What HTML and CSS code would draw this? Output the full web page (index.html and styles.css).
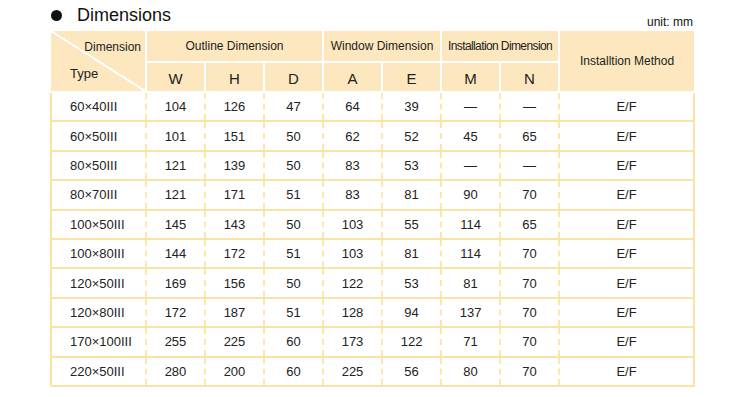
FILE: index.html
```html
<html>
<head>
<meta name="viewport" content="width=device-width, initial-scale=1">
<title>Dimensions</title>
<link rel="stylesheet" href="styles.css">
</head>
<body>
<div class="sheet">
    <div class="title-bar">
        <h2 class="title"><span class="dot"></span>Dimensions</h2>
        <span class="unit">unit: mm</span>
    </div>
    <table class="dims">
        <colgroup>
            <col class="c-type">
            <col class="c-num"><col class="c-num"><col class="c-num">
            <col class="c-num"><col class="c-num">
            <col class="c-num"><col class="c-num">
            <col class="c-method">
        </colgroup>
        <thead>
            <tr class="head-top">
                <th rowspan="2" class="corner">
                    <div class="corner-box">
                        <span class="corner-dim">Dimension</span>
                        <span class="corner-type">Type</span>
                    </div>
                </th>
                <th colspan="3">Outline Dimension</th>
                <th colspan="2">Window Dimension</th>
                <th colspan="2" class="tight">Installation Dimension</th>
                <th rowspan="2">Installtion Method</th>
            </tr>
            <tr class="head-sub">
                <th>W</th><th>H</th><th>D</th>
                <th>A</th><th>E</th>
                <th>M</th><th>N</th>
            </tr>
        </thead>
        <tbody>
            <tr><td class="type">60×40III</td><td>104</td><td>126</td><td>47</td><td>64</td><td>39</td><td>—</td><td>—</td><td>E/F</td></tr>
            <tr><td class="type">60×50III</td><td>101</td><td>151</td><td>50</td><td>62</td><td>52</td><td>45</td><td>65</td><td>E/F</td></tr>
            <tr><td class="type">80×50III</td><td>121</td><td>139</td><td>50</td><td>83</td><td>53</td><td>—</td><td>—</td><td>E/F</td></tr>
            <tr><td class="type">80×70III</td><td>121</td><td>171</td><td>51</td><td>83</td><td>81</td><td>90</td><td>70</td><td>E/F</td></tr>
            <tr><td class="type">100×50III</td><td>145</td><td>143</td><td>50</td><td>103</td><td>55</td><td>114</td><td>65</td><td>E/F</td></tr>
            <tr><td class="type">100×80III</td><td>144</td><td>172</td><td>51</td><td>103</td><td>81</td><td>114</td><td>70</td><td>E/F</td></tr>
            <tr><td class="type">120×50III</td><td>169</td><td>156</td><td>50</td><td>122</td><td>53</td><td>81</td><td>70</td><td>E/F</td></tr>
            <tr><td class="type">120×80III</td><td>172</td><td>187</td><td>51</td><td>128</td><td>94</td><td>137</td><td>70</td><td>E/F</td></tr>
            <tr><td class="type">170×100III</td><td>255</td><td>225</td><td>60</td><td>173</td><td>122</td><td>71</td><td>70</td><td>E/F</td></tr>
            <tr><td class="type">220×50III</td><td>280</td><td>200</td><td>60</td><td>225</td><td>56</td><td>80</td><td>70</td><td>E/F</td></tr>
        </tbody>
    </table>
</div>
</body>
</html>
```

FILE: styles.css
```css
body {
    margin: 0;
    padding: 0;
    background: #fff;
    color: #222;
    font-family: "Liberation Sans", Arial, sans-serif;
}
.sheet {
    width: 643px;
    margin-left: 50px;
}
.title-bar {
    display: flex;
    justify-content: space-between;
    align-items: flex-end;
    height: 31px;
}
.title {
    display: flex;
    align-items: center;
    margin: 0;
    padding-bottom: 5px;
    font-size: 18px;
    font-weight: normal;
    color: #111;
}
.dot {
    display: inline-block;
    width: 11px;
    height: 11px;
    border-radius: 50%;
    background: #111;
    margin: 0 15px 0 1px;
}
.unit {
    font-size: 12px;
    padding-bottom: 2px;
    color: #111;
}
.dims {
    width: 643px;
    table-layout: fixed;
    border-collapse: collapse;
    font-size: 13px;
}
.c-type { width: 95px; }
.c-num { width: 59px; }
.c-method { width: 135px; }
.dims th {
    background: #fce7bf;
    border: 2px solid #fff;
    border-top: none;
    font-weight: normal;
    font-size: 12px;
    color: #222;
    padding: 0;
    white-space: nowrap;
}
.dims th.tight { letter-spacing: -0.6px; }
.dims th:first-child { border-left: none; }
.dims th:last-child { border-right: none; }
.head-top th { height: 31px; }
.head-sub th {
    height: 30px;
    font-size: 15px;
    padding-top: 2px;
}
.dims .corner {
    background: #fce7bf linear-gradient(to top right, transparent calc(50% - 1px), #fff calc(50% - 1px), #fff calc(50% + 1px), transparent calc(50% + 1px));
}
.corner-box {
    display: grid;
    grid-template-rows: 30px 30px;
    align-items: center;
}
.corner-dim {
    text-align: right;
    padding: 1px 4px 0 0;
}
.corner-type {
    text-align: left;
    padding: 0 0 5px 19px;
    font-size: 13px;
}
.dims td {
    height: 29.4px;
    padding: 0;
    text-align: center;
    border-top: 2px solid #fbe3a4;
    border-bottom: 2px solid #fbe3a4;
    border-left: 2px dashed #fde8ab;
    border-right: 2px dashed #fde8ab;
}
.dims td:first-child { border-left: 2px solid #fbe3a4; }
.dims td:last-child { border-right: 2px solid #fbe3a4; }
.dims td.type {
    text-align: left;
    padding-left: 18px;
}
```
